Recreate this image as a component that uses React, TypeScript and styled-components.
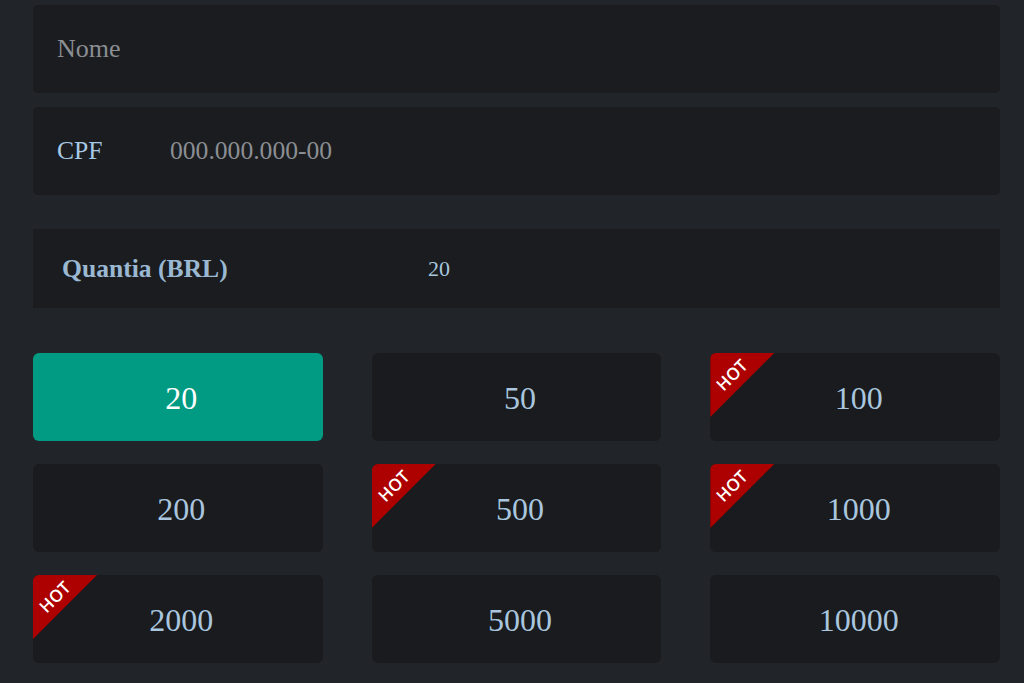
import React, { useState } from 'react'
import styled, { createGlobalStyle } from 'styled-components'

const GlobalStyle = createGlobalStyle`
  html,
  body {
    margin: 0;
    padding: 0;
    background-color: #212428;
  }
  body {
    font-family: 'Liberation Serif', 'Times New Roman', serif;
  }
`

const Page = styled.div`
  display: flex;
  flex-direction: column;
  padding: 5px 24px 20px 33px;
  min-height: 683px;
  box-sizing: border-box;
`
const Field = styled.div<{ $square?: boolean }>`
  display: flex;
  align-items: center;
  height: ${(p) => (p.$square ? 79 : 88)}px;
  background-color: #1a1c1f;
  border-radius: ${(p) => (p.$square ? 0 : 5)}px;
  box-sizing: border-box;
  padding-left: 24px;
`
const Label = styled.label<{ $width: number; $bold?: boolean }>`
  flex: 0 0 ${(p) => p.$width}px;
  font-size: 25.6px;
  font-weight: ${(p) => (p.$bold ? 700 : 400)};
  color: ${(p) => (p.$bold ? '#9ab8d2' : '#a7c9e6')};
`
const Input = styled.input<{ $size?: number }>`
  flex: 1;
  min-width: 0;
  border: none;
  outline: none;
  background: transparent;
  padding: 0;
  font-family: 'Liberation Serif', 'Times New Roman', serif;
  font-size: ${(p) => p.$size ?? 25.6}px;
  color: #a9c6de;
  &::placeholder {
    font-family: 'Liberation Serif', 'Times New Roman', serif;
    color: #8b8e92;
  }
`
const Spacer = styled.div<{ $h: number }>`
  height: ${(p) => p.$h}px;
  flex: 0 0 auto;
`
const Grid = styled.div`
  display: grid;
  grid-template-columns: repeat(3, 1fr);
  column-gap: 49px;
  row-gap: 23px;
`
const Amount = styled.button<{ $active?: boolean }>`
  position: relative;
  overflow: hidden;
  height: 88px;
  border: none;
  border-radius: 6px;
  cursor: pointer;
  padding: 2px 0 0 7px;
  font-family: 'Liberation Serif', 'Times New Roman', serif;
  font-size: 32px;
  color: ${(p) => (p.$active ? '#ffffff' : '#a9c6de')};
  background-color: ${(p) => (p.$active ? '#009b82' : '#191b1e')};
`
const Hot = styled.span`
  position: absolute;
  top: 0;
  left: 0;
  width: 64px;
  height: 64px;
  background-color: #ad0000;
  clip-path: polygon(0 0, 100% 0, 0 100%);
`
const HotText = styled.span`
  position: absolute;
  left: 0;
  top: 13px;
  width: 44px;
  text-align: center;
  transform: rotate(-45deg);
  font-family: 'Open Sans', 'DejaVu Sans', sans-serif;
  font-weight: 600;
  font-size: 17px;
  line-height: 18px;
  color: #ffffff;
`

const amounts = [
  { v: 20 },
  { v: 50 },
  { v: 100, hot: true },
  { v: 200 },
  { v: 500, hot: true },
  { v: 1000, hot: true },
  { v: 2000, hot: true },
  { v: 5000 },
  { v: 10000 },
]

const App = () => {
  const [value, setValue] = useState(20)

  return (
    <Page>
      <GlobalStyle />
      <Field>
        <Input placeholder="Nome" $size={26} />
      </Field>
      <Spacer $h={14} />
      <Field>
        <Label $width={113}>CPF</Label>
        <Input placeholder="000.000.000-00" />
      </Field>
      <Spacer $h={34} />
      <Field $square>
        <Label $width={366} $bold style={{ paddingLeft: 5 }}>
          Quantia (BRL)
        </Label>
        <Input $size={22} value={value} readOnly />
      </Field>
      <Spacer $h={45} />
      <Grid>
        {amounts.map((a) => (
          <Amount
            key={a.v}
            $active={a.v === value}
            onClick={() => setValue(a.v)}
          >
            {a.hot && (
              <Hot>
                <HotText>HOT</HotText>
              </Hot>
            )}
            {a.v}
          </Amount>
        ))}
      </Grid>
    </Page>
  )
}

export default App
